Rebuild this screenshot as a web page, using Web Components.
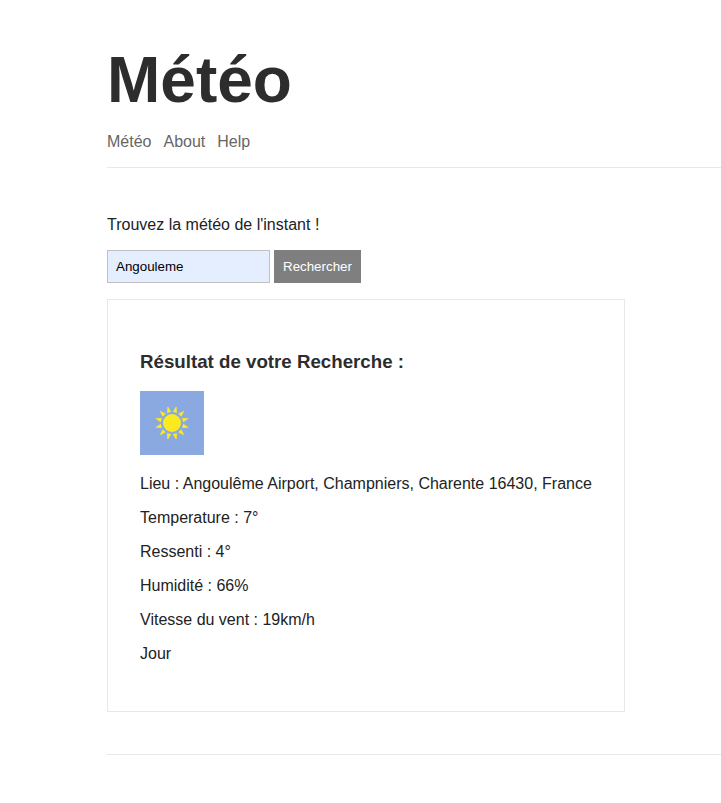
<!DOCTYPE html>
<html lang="fr">
<head>
<meta charset="utf-8">
<title>Météo</title>
<style>
body{margin:0;color:#2d2d2d;font:16px/18px "Liberation Sans",Arial,sans-serif}
</style>
</head>
<body>
<weather-page>
  <site-header slot="header"></site-header>
  <search-form></search-form>
  <weather-result></weather-result>
</weather-page>
<script>
const define = (name, html) => customElements.define(name, class extends HTMLElement {
  constructor() {
    super();
    this.attachShadow({mode: "open"}).innerHTML = html;
  }
});

define("weather-page", `
<style>
:host{display:block;padding-left:107px}
main{display:flex;flex-direction:column;align-items:flex-start;padding:48px 0 42px}
footer{border-top:1px solid #e8e8e8;height:48px}
</style>
<slot name="header"></slot>
<main><slot></slot></main>
<footer></footer>`);

define("site-header", `
<style>
:host{display:block;padding-top:43px;border-bottom:1px solid #e8e8e8}
h1{margin:0;font-size:64px;line-height:74px}
nav{display:flex;gap:12px;padding:16px 0}
a{color:#666;text-decoration:none}
</style>
<h1>Météo</h1>
<nav><a href="#meteo">Météo</a><a href="#about">About</a><a href="#help">Help</a></nav>`);

define("search-form", `
<style>
:host{display:block}
label{display:block;margin-bottom:16px;color:#222}
div{display:flex;gap:4px}
input,button{box-sizing:border-box;height:33px;padding:8px;font-family:"Liberation Sans",Arial,sans-serif}
input{width:163px;border:1px solid #c0c0c0;background:#e4eeff;color:#000}
button{border:1px solid #7f7f7f;background:#7f7f7f;color:#fff}
</style>
<form><label for="city">Trouvez la météo de l'instant !</label>
<div><input id="city" value="Angouleme"><button type="button">Rechercher</button></div></form>`);

const rays = Array.from({length: 12}, (_, i) =>
  `<path transform="rotate(${15 + i * 30} 32 32)" d="M29.9 21L31.6 15.4H32.4L34.1 21Z"/>`
).join("");

define("weather-result", `
<style>
:host{display:block;margin-top:16px;padding:51px 32px 48px;border:1px solid #e8e8e8;color:#222}
h3{margin:0 0 18px;line-height:22px;color:#2d2d2d}
svg{display:block;background:#8aa9e0}
p{margin:16px 0 0}
svg + p{margin-top:20px}
</style>
<h3>Résultat de votre Recherche :</h3>
<svg width="64" height="64" viewBox="0 0 64 64" fill="#fcea20" aria-hidden="true"><circle cx="32" cy="32" r="9"/>${rays}</svg>
<p>Lieu : Angoulême Airport, Champniers, Charente 16430, France</p>
<p>Temperature : 7°</p>
<p>Ressenti : 4°</p>
<p>Humidité : 66%</p>
<p>Vitesse du vent : 19km/h</p>
<p>Jour</p>`);
</script>
</body>
</html>
